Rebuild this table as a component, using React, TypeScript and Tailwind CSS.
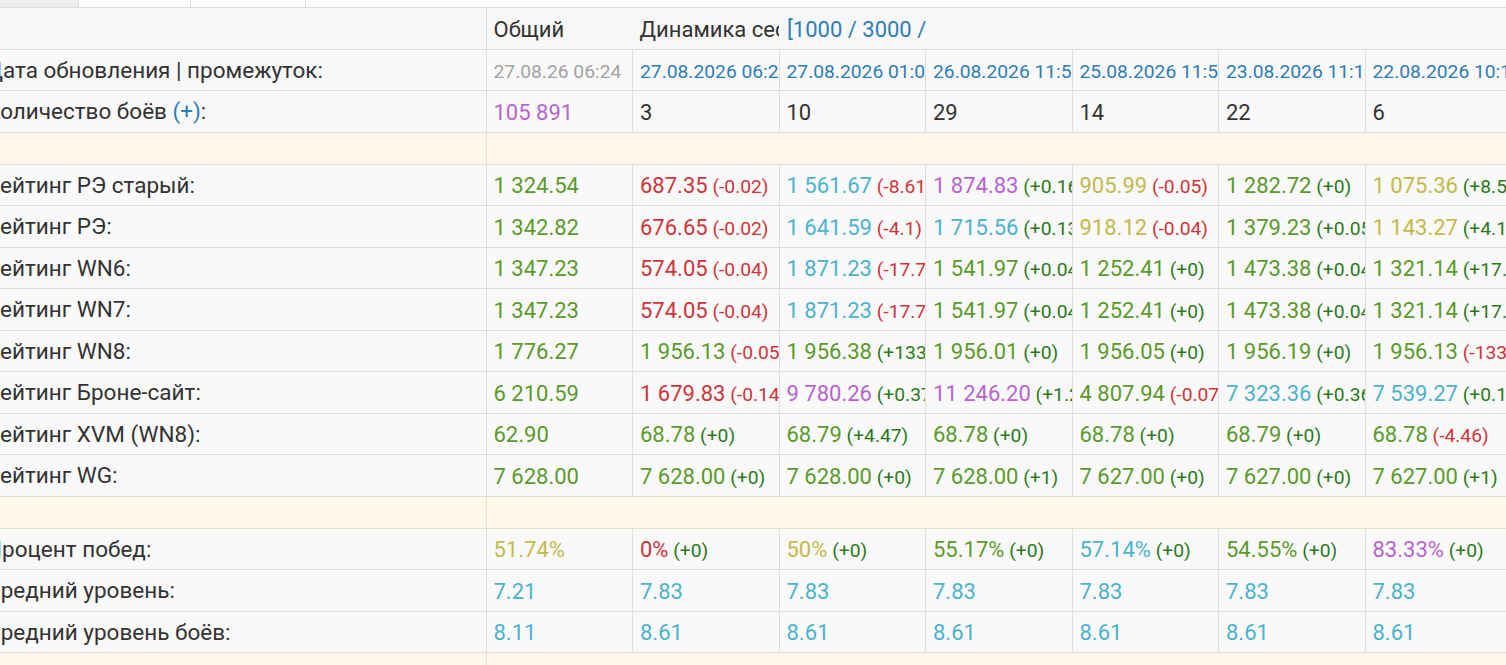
type Tone = "G" | "g" | "R" | "C" | "P" | "Y" | "B" | "K" | "N";

const TONE: Record<Tone, string> = {
  G: "text-[#5b9a2c]",
  g: "text-[#2b7a1c]",
  R: "text-[#d0343a]",
  C: "text-[#4cb3cc]",
  P: "text-[#b864d0]",
  Y: "text-[#c4b94b]",
  B: "text-[#2f7db5]",
  K: "text-[#333333]",
  N: "text-[#a3a3a3]",
};

type Cell = { v: string; t: Tone; d?: string; dt?: Tone; small?: boolean };

type Row = { label: React.ReactNode; cells: Cell[] } | "sep";

const c = (v: string, t: Tone, d?: string, dt?: Tone): Cell => ({ v, t, d, dt });

const ROWS: Row[] = [
  {
    label: "Дата обновления | промежуток:",
    cells: [
      { v: "27.08.26 06:24", t: "N", small: true },
      { v: "27.08.2026 06:24", t: "B", small: true },
      { v: "27.08.2026 01:02", t: "B", small: true },
      { v: "26.08.2026 11:57", t: "B", small: true },
      { v: "25.08.2026 11:53", t: "B", small: true },
      { v: "23.08.2026 11:14", t: "B", small: true },
      { v: "22.08.2026 10:18", t: "B", small: true },
    ],
  },
  {
    label: (
      <>
        Количество боёв <span className="text-[#2f7db5]">(+)</span>:
      </>
    ),
    cells: [c("105 891", "P"), c("3", "K"), c("10", "K"), c("29", "K"), c("14", "K"), c("22", "K"), c("6", "K")],
  },
  "sep",
  {
    label: "Рейтинг РЭ старый:",
    cells: [
      c("1 324.54", "G"),
      c("687.35", "R", "(-0.02)", "R"),
      c("1 561.67", "C", "(-8.61)", "R"),
      c("1 874.83", "P", "(+0.16)", "g"),
      c("905.99", "Y", "(-0.05)", "R"),
      c("1 282.72", "G", "(+0)", "g"),
      c("1 075.36", "Y", "(+8.52)", "g"),
    ],
  },
  {
    label: "Рейтинг РЭ:",
    cells: [
      c("1 342.82", "G"),
      c("676.65", "R", "(-0.02)", "R"),
      c("1 641.59", "C", "(-4.1)", "R"),
      c("1 715.56", "C", "(+0.13)", "g"),
      c("918.12", "Y", "(-0.04)", "R"),
      c("1 379.23", "G", "(+0.05)", "g"),
      c("1 143.27", "Y", "(+4.13)", "g"),
    ],
  },
  {
    label: "Рейтинг WN6:",
    cells: [
      c("1 347.23", "G"),
      c("574.05", "R", "(-0.04)", "R"),
      c("1 871.23", "C", "(-17.72)", "R"),
      c("1 541.97", "G", "(+0.04)", "g"),
      c("1 252.41", "G", "(+0)", "g"),
      c("1 473.38", "G", "(+0.04)", "g"),
      c("1 321.14", "G", "(+17.7)", "g"),
    ],
  },
  {
    label: "Рейтинг WN7:",
    cells: [
      c("1 347.23", "G"),
      c("574.05", "R", "(-0.04)", "R"),
      c("1 871.23", "C", "(-17.72)", "R"),
      c("1 541.97", "G", "(+0.04)", "g"),
      c("1 252.41", "G", "(+0)", "g"),
      c("1 473.38", "G", "(+0.04)", "g"),
      c("1 321.14", "G", "(+17.7)", "g"),
    ],
  },
  {
    label: "Рейтинг WN8:",
    cells: [
      c("1 776.27", "G"),
      c("1 956.13", "G", "(-0.05)", "R"),
      c("1 956.38", "G", "(+133.4)", "g"),
      c("1 956.01", "G", "(+0)", "g"),
      c("1 956.05", "G", "(+0)", "g"),
      c("1 956.19", "G", "(+0)", "g"),
      c("1 956.13", "G", "(-133.4)", "R"),
    ],
  },
  {
    label: "Рейтинг Броне-сайт:",
    cells: [
      c("6 210.59", "G"),
      c("1 679.83", "R", "(-0.14)", "R"),
      c("9 780.26", "P", "(+0.37)", "g"),
      c("11 246.20", "P", "(+1.2)", "g"),
      c("4 807.94", "G", "(-0.07)", "R"),
      c("7 323.36", "C", "(+0.36)", "g"),
      c("7 539.27", "C", "(+0.12)", "g"),
    ],
  },
  {
    label: "Рейтинг XVM (WN8):",
    cells: [
      c("62.90", "G"),
      c("68.78", "G", "(+0)", "g"),
      c("68.79", "G", "(+4.47)", "g"),
      c("68.78", "G", "(+0)", "g"),
      c("68.78", "G", "(+0)", "g"),
      c("68.79", "G", "(+0)", "g"),
      c("68.78", "G", "(-4.46)", "R"),
    ],
  },
  {
    label: "Рейтинг WG:",
    cells: [
      c("7 628.00", "G"),
      c("7 628.00", "G", "(+0)", "g"),
      c("7 628.00", "G", "(+0)", "g"),
      c("7 628.00", "G", "(+1)", "g"),
      c("7 627.00", "G", "(+0)", "g"),
      c("7 627.00", "G", "(+0)", "g"),
      c("7 627.00", "G", "(+1)", "g"),
    ],
  },
  "sep",
  {
    label: "Процент побед:",
    cells: [
      c("51.74%", "Y"),
      c("0%", "R", "(+0)", "g"),
      c("50%", "Y", "(+0)", "g"),
      c("55.17%", "G", "(+0)", "g"),
      c("57.14%", "C", "(+0)", "g"),
      c("54.55%", "G", "(+0)", "g"),
      c("83.33%", "P", "(+0)", "g"),
    ],
  },
  {
    label: "Средний уровень:",
    cells: [c("7.21", "C"), c("7.83", "C"), c("7.83", "C"), c("7.83", "C"), c("7.83", "C"), c("7.83", "C"), c("7.83", "C")],
  },
  {
    label: "Средний уровень боёв:",
    cells: [c("8.11", "C"), c("8.61", "C"), c("8.61", "C"), c("8.61", "C"), c("8.61", "C"), c("8.61", "C"), c("8.61", "C")],
  },
  "sep",
];

function ValueCell({ cell }: { cell: Cell }) {
  return (
    <td className="h-[41.5px] overflow-hidden whitespace-nowrap border-r border-b border-[#dddddd] pl-[7px] pt-[2px]">
      <span className={`${TONE[cell.t]} ${cell.small ? "text-[19.25px]" : ""}`}>{cell.v}</span>
      {cell.d && <span className={`${TONE[cell.dt ?? "g"]} text-[19.25px]`}> {cell.d}</span>}
    </td>
  );
}

export default function App() {
  return (
    <div className="h-[665px] w-[1506px] overflow-hidden bg-white font-['Roboto',sans-serif] text-[22px] text-[#333333]">
      <div className="flex h-[8px] border-b border-[#dddddd]">
        <div className="w-[79px] border-r border-[#dddddd] bg-[#eeeeee]" />
        <div className="w-[112px] border-r border-[#dddddd] bg-[#fdfdfd]" />
        <div className="w-[115px] border-r border-[#dddddd] bg-[#fdfdfd]" />
        <div className="flex-1 bg-[#fdfdfd]" />
      </div>
      <table className="ml-[-16px] w-[1527px] table-fixed border-collapse bg-[#f9f9f9]">
        <colgroup>
          <col className="w-[502px]" />
          <col className="w-[146.5px]" />
          <col className="w-[146.5px]" />
          <col className="w-[146.5px]" />
          <col className="w-[146.5px]" />
          <col className="w-[146.5px]" />
          <col className="w-[146.5px]" />
          <col className="w-[146.5px]" />
        </colgroup>
        <tbody>
          <tr className="bg-[#f7f7f7]">
            <td className="h-[41px] border-r border-b border-[#dddddd]" />
            <td className="overflow-hidden whitespace-nowrap border-b border-[#dddddd] pl-[7px] pt-[2px]">Общий</td>
            <td className="overflow-hidden whitespace-nowrap border-b border-[#dddddd] pl-[7px] pt-[2px]">Динамика сессий</td>
            <td colSpan={5} className="overflow-hidden whitespace-nowrap border-b border-[#dddddd] pl-[8px] pt-[2px]">
              <div className="w-[139px] overflow-hidden text-[#2f7db5]">[1000 / 3000 / 5000]</div>
            </td>
          </tr>
          {ROWS.map((row, i) =>
            row === "sep" ? (
              <tr key={i} className="bg-[#fdf8ea]">
                <td className="h-[32px] border-r border-b border-[#e6e0cc]" />
                <td colSpan={7} className="border-b border-[#e6e0cc]" />
              </tr>
            ) : (
              <tr key={i}>
                <td className="h-[41.5px] overflow-hidden whitespace-nowrap border-r border-b border-[#dddddd] pl-[2px] pt-[2px] text-[22.5px]">
                  {row.label}
                </td>
                {row.cells.map((cell, j) => (
                  <ValueCell key={j} cell={cell} />
                ))}
              </tr>
            )
          )}
        </tbody>
      </table>
    </div>
  );
}
